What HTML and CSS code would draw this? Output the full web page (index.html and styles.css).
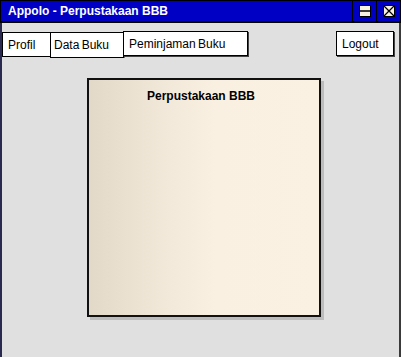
FILE: index.html
```html
<!DOCTYPE html>
<html>
<head>
<meta charset="utf-8">
<link rel="stylesheet" href="styles.css">
</head>
<body>
<div class="window">
  <div class="titlebar">
    <span class="title">Appolo - Perpustakaan BBB</span>
    <div class="controls">
      <div class="ctl">
        <svg width="12" height="12" viewBox="0 0 12 12"><rect x="0.5" y="0.5" width="11" height="11" fill="#f8f0e0" stroke="#000"/><line x1="0" y1="6" x2="12" y2="6" stroke="#000" stroke-width="1.5"/></svg>
      </div>
      <div class="ctl">
        <svg width="12" height="12" viewBox="0 0 12 12"><rect x="0.5" y="0.5" width="11" height="11" fill="#f8f0e0" stroke="#000"/><path d="M1 1 L11 11 M11 1 L1 11" stroke="#000" stroke-width="1.2"/></svg>
      </div>
    </div>
  </div>
  <div class="toolbar">
    <div class="tab tab-profil">Profil</div>
    <div class="tab tab-data">Data Buku</div>
    <div class="tab tab-pinjam">Peminjaman Buku</div>
    <div class="spacer"></div>
    <div class="tab tab-logout">Logout</div>
  </div>
  <div class="content">
    <div class="card">
      <div class="card-title">Perpustakaan BBB</div>
    </div>
  </div>
</div>
</body>
</html>
```
FILE: styles.css
```css
* { box-sizing: border-box; }
html, body { margin: 0; padding: 0; }
body {
  width: 401px;
  height: 357px;
  overflow: hidden;
  font-family: "Liberation Sans", Arial, sans-serif;
  background: #e0e0e0;
}
.window {
  width: 401px;
  height: 357px;
  background: #e0e0e0;
  border-left: 2px solid #2a2a50;
  border-right: 2px solid #3a3a3a;
  display: flex;
  flex-direction: column;
}
.titlebar {
  height: 23px;
  margin-left: -2px;
  margin-right: -2px;
  background: #0000c4;
  border: 1px solid #000;
  border-bottom-width: 2px;
  display: flex;
  align-items: center;
  color: #fff;
}
.title {
  font-weight: bold;
  font-size: 12px;
  padding-left: 7px;
  flex: 1;
  padding-bottom: 1px;
}
.controls {
  display: flex;
  height: 100%;
}
.ctl {
  width: 24px;
  height: 100%;
  border-left: 1px solid #000;
  display: flex;
  align-items: center;
  justify-content: center;
  padding-bottom: 1px;
}
.toolbar {
  display: flex;
  align-items: flex-start;
  margin-top: 8px;
  height: 27px;
}
.tab {
  background: #fff;
  border: 1px solid #000;
  font-size: 12px;
  color: #000;
  height: 25px;
  display: flex;
  align-items: center;
  padding: 0 5px;
}
.tab-profil {
  width: 49px;
  margin-top: 1px;
}
.tab-data {
  width: 74px;
  margin-left: -1px;
  margin-top: 1px;
  height: 26px;
  padding-left: 3px;
  box-shadow: 1px 0 0 #777;
  word-spacing: -1px;
}
.tab-pinjam {
  width: 125px;
  margin-left: -1px;
  height: 25px;
  box-shadow: 1px 1px 0 #444;
  word-spacing: -1px;
}
.spacer { flex: 1; }
.tab-logout {
  width: 58px;
  margin-right: 5px;
  padding-left: 5px;
  box-shadow: 1px 1px 0 #444;
}
.content {
  flex: 1;
  padding-top: 20px;
  padding-left: 85px;
}
.card {
  width: 234px;
  height: 239px;
  border: 2px solid #111;
  background: linear-gradient(to right, #e2d9c8 0%, #f3e9da 35%, #faf0e2 55%, #fbf1e3 100%);
  box-shadow: 3px 3px 0 #bcbcbc;
}
.card-title {
  text-align: center;
  font-weight: bold;
  font-size: 12px;
  color: #000;
  padding-top: 9px;
  padding-right: 6px;
}
```
